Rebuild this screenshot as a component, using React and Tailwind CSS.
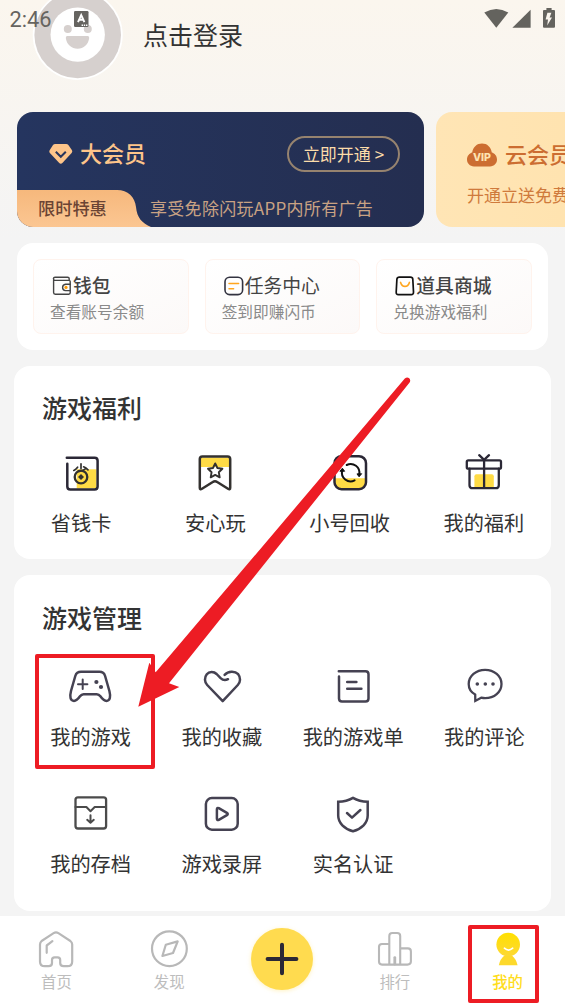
import { useId } from "react";

const dark = "#2b2836";
const slate = "#454252";
const yellow = "#ffdb45";

function Icon({ children, color = slate, width = 2.5 }) {
    return (
        <svg
            viewBox="0 0 48 48"
            className="h-12 w-12 shrink-0"
            fill="none"
            stroke={color}
            strokeWidth={width}
            strokeLinecap="round"
            strokeLinejoin="round"
        >
            {children}
        </svg>
    );
}

/* Juegos: beneficios */
const SaveCardIcon = () => (
    <Icon color={dark}>
        <path d="M19.7 20.3H39.5V39.5H19.7Z" fill={yellow} stroke="none" />
        <path d="M9.8 8.7H37.6Q40.6 8.7 40.6 11.7V37.5Q40.6 40.5 37.6 40.5H13.3Q10.3 40.5 10.3 37.5V14.8" />
        <circle cx="24" cy="28" r="6.3" stroke="#33312f" strokeWidth="2.3" />
        <path d="M24 25L27 28L24 31L21 28Z" fill="#33312f" stroke="none" />
        <path d="M24 14.8V19.4M20.6 18.2Q19 20.4 16.8 21.4M26.6 17.8Q29 18.8 31 20.8M28.8 19.6Q25.6 21.8 22 22.4" stroke="#33312f" strokeWidth="1.7" />
    </Icon>
);

const SafeIcon = () => (
    <Icon color="#33312f">
        <path d="M9.5 8.5H38.5V18H9.5Z" fill={yellow} stroke="none" />
        <path d="M8.8 38.7V10Q8.8 7.4 11.4 7.4H36.6Q39.2 7.4 39.2 10V38.7Q39.2 41.2 37 39.8L26.2 33Q24 31.4 21.8 33L11 39.8Q8.8 41.2 8.8 38.7Z" />
        <path d="M24.2 14.4L26.4 19L31.4 19.7L27.8 23.2L28.7 28.3L24.2 25.9L19.7 28.3L20.6 23.2L17 19.7L22 19Z" strokeWidth="1.9" />
    </Icon>
);

const RecycleIcon = () => (
    <Icon color={dark}>
        <path d="M9 29.3H39.5V33Q39.5 39.5 33 39.5H15.5Q9 39.5 9 33Z" fill={yellow} stroke="none" />
        <rect x="8.5" y="7.2" width="31.5" height="33" rx="7" />
        <g stroke="#111">
            <path d="M20.7 16A8.7 8.7 0 0 1 33.2 25.5M28.6 31.4A8.7 8.7 0 0 1 16.2 21.5" strokeWidth="2" />
            <path d="M31.2 25.2L33.1 27.8L35.4 25ZM14.2 22L16.4 19.2L18.4 22Z" fill="#111" strokeWidth="1" />
        </g>
    </Icon>
);

const GiftIcon = () => (
    <Icon color={dark} width={2.3}>
        <path d="M14.4 27.2Q14.4 25.2 16.4 25.2H31.8Q33.8 25.2 33.8 27.2V38.5H14.4Z" fill={yellow} stroke="none" />
        <rect x="6.8" y="11.3" width="34.2" height="8.4" rx="1.5" />
        <path d="M9.5 19.7V36.2Q9.5 39.2 12.5 39.2H35.8Q38.8 39.2 38.8 36.2V19.7M24.1 10.5V39M19.2 6.2L24.1 10.8L29 6.2" />
    </Icon>
);

/* Juegos: gestión */
const GamepadIcon = () => (
    <Icon>
        <path d="M14 9.8H32.4Q36.8 9.8 38.1 14L42.4 29C43.8 34.5 43.2 38.9 39.4 38.9C36.6 38.9 35 36.6 33.4 34.3Q31.9 32.2 29.8 32.2H16.6Q14.5 32.2 13 34.3C11.4 36.6 9.8 38.9 7 38.9C3.2 38.9 2.6 34.5 4 29L8.3 14Q9.6 9.8 14 9.8Z" />
        <path d="M11 22.2H20.4M15.7 17.4V27" strokeWidth="2" />
        <circle cx="29.4" cy="20" r="2.1" fill={slate} stroke="none" />
        <circle cx="34" cy="25" r="2.1" fill={slate} stroke="none" />
    </Icon>
);

const HeartIcon = () => (
    <Icon>
        <path d="M30 17.2Q26 19.4 22.6 16.2L18.6 12C15.8 9.2 11.2 9.2 8.8 12.2C6.2 15.4 6.4 20 9.2 23L24.7 39.2L39.8 23C42.6 20 42.8 15.4 40.2 12.2C36.8 8.6 30.4 8.8 26.6 12.8" />
    </Icon>
);

const ListIcon = () => (
    <Icon>
        <path d="M9.8 9.2H36.5Q39.5 9.2 39.5 12.2V36.6Q39.5 39.6 36.5 39.6H13Q10 39.6 10 36.6V14.6M18.2 20H27.4M18.2 26.8H32.4" />
    </Icon>
);

const CommentIcon = () => (
    <Icon width={2.3}>
        <path d="M15.2 32.6C10.6 30 8.7 26.4 8.7 22C8.7 14 16 7.8 25.1 7.8C34.2 7.8 41.5 14 41.5 22C41.5 30 34.2 36.2 25.1 36.2C23.8 36.2 22.4 36 21.2 35.7L15.3 38.9Z" strokeLinejoin="miter" />
        <g fill={slate} stroke="none">
            <circle cx="17.3" cy="22" r="1.8" />
            <circle cx="25.3" cy="22" r="1.8" />
            <circle cx="33" cy="22" r="1.8" />
        </g>
    </Icon>
);

const ArchiveIcon = () => (
    <Icon color="#4b4b4b" width={2.3}>
        <rect x="8.5" y="8.3" width="30.6" height="31.2" rx="2.5" />
        <path d="M8.5 18H19.4L23.5 22.2L27.7 18H39M23.5 26.2V33.6M20.2 30.8L23.5 33.8L26.8 30.8" strokeWidth="2" />
    </Icon>
);

const RecordIcon = () => (
    <Icon>
        <rect x="7.9" y="9.1" width="31.8" height="31.6" rx="6" />
        <path d="M18.9 20.4Q18.9 18.2 20.8 19.2L28.9 23.9Q30.6 25 28.9 26.1L20.8 30.8Q18.9 31.8 18.9 29.6Z" />
    </Icon>
);

const ShieldIcon = () => (
    <Icon>
        <path d="M24 8.9Q30.4 12.5 38.7 12.8V26.5C38.7 34 32.6 39.8 24 42.2C15.4 39.8 9.2 34 9.2 26.5V12.8Q17.6 12.5 24 8.9Z" strokeLinejoin="miter" />
        <path d="M18 24L23 28.7L31.4 21" />
    </Icon>
);

/* Barra inferior */
const HomeIcon = () => (
    <Icon color="#b8b8b8" width={2.2}>
        <path d="M8 19.6Q8 17.4 9.6 16L21.6 8.2Q24 6.6 26.4 8.2L38.4 16Q40.2 17.4 40.2 19.6V36.4Q40.2 41.2 35.4 41.2H31.6Q28.2 41.2 28.2 38V35Q28.2 32.4 25.6 32.4H22.6Q20 32.4 20 35V38Q20 41.2 16.6 41.2H12.8Q8 41.2 8 36.4Z" />
        <path d="M14.7 27.8V20.5L20.4 16.2" />
    </Icon>
);

const CompassIcon = () => (
    <Icon color="#b8b8b8" width={2.2}>
        <circle cx="24.4" cy="23.7" r="17.4" />
        <path d="M32.7 16.4L20.8 19.8L17.4 31L28 28Z" />
    </Icon>
);

const RankIcon = () => (
    <Icon color="#b8b8b8" width={2.1}>
        <path d="M18.3 39.6V11Q18.3 8 21.3 8H26.2Q29.2 8 29.2 11V39.6M18.3 19H11Q8 19 8 22V36.6Q8 39.6 11 39.6H36.4Q39.9 39.6 39.9 36.6V26.4Q39.9 23.4 36.9 23.4H29.2" />
        <path d="M23.8 32.6V39" strokeWidth="2.8" />
    </Icon>
);

function MeIcon() {
    const id = useId();
    return (
        <Icon>
            <defs>
                <linearGradient id={id} x1="0" y1="0" x2="0" y2="1">
                    <stop offset="0" stopColor="#ffe000" />
                    <stop offset="1" stopColor="#fdd835" />
                </linearGradient>
            </defs>
            <circle cx="24.2" cy="19.6" r="11.8" fill={`url(#${id})`} stroke="none" />
            <path d="M14.8 40.2Q16.4 33.6 20.2 30.8H28.2Q31.8 33.6 33.6 40.2Z" fill="#fdd92b" stroke="none" />
            <path d="M20.4 23.2Q24.5 27 28.7 23.2" stroke="#fff" strokeWidth="1.6" />
        </Icon>
    );
}

/* Accesos rápidos */
const quick = [
    {
        title: "钱包",
        text: "查看账号余额",
        weight: "font-medium",
        icon: (
            <>
                <path d="M1.6 4.2V16.6Q1.6 18.2 3.2 18.2H16.8Q18.2 18.2 18.2 16.8V5.6Q18.2 4.4 17 4.4H2.6Q1.4 4 1.4 2.6Q1.6 1.2 3 1.2H15.6Q17.2 1.2 17.2 2.8V4.4" stroke="#444" strokeWidth="1.4" />
                <path d="M18.2 8.2H13.6Q10.6 8.6 10.6 11.4Q10.6 14.2 13.6 14.6H18.2" stroke="#444" strokeWidth="1.4" />
                <circle cx="14" cy="11.4" r="1.6" fill="#ff9d0a" />
            </>
        ),
    },
    {
        title: "任务中心",
        text: "签到即赚闪币",
        weight: "font-normal",
        icon: (
            <>
                <rect x="1" y="1.2" width="17.6" height="17.4" rx="4.6" stroke="#333340" strokeWidth="1.6" />
                <path d="M5 7.6H14.6M5 12.8H9.6" stroke="#ffa51e" strokeWidth="1.5" />
            </>
        ),
    },
    {
        title: "道具商城",
        text: "兑换游戏福利",
        weight: "font-medium",
        icon: (
            <>
                <path d="M4.4 1.2H15.4Q17.6 1.2 17.8 3.2L18.5 16Q18.6 18.6 16.2 18.6H3.4Q1 18.6 1.2 16L1.9 3.2Q2.2 1.2 4.4 1.2Z" stroke="#111" strokeWidth="1.7" />
                <path d="M5.6 6.4Q6.8 10.4 10 10.4Q13.2 10.4 14.4 6.4" stroke="#ffa51e" strokeWidth="1.6" />
            </>
        ),
    },
];

const welfare = [
    { label: "省钱卡", icon: <SaveCardIcon /> },
    { label: "安心玩", icon: <SafeIcon /> },
    { label: "小号回收", icon: <RecycleIcon /> },
    { label: "我的福利", icon: <GiftIcon /> },
];

const manage = [
    { label: "我的游戏", icon: <GamepadIcon /> },
    { label: "我的收藏", icon: <HeartIcon /> },
    { label: "我的游戏单", icon: <ListIcon /> },
    { label: "我的评论", icon: <CommentIcon /> },
    { label: "我的存档", icon: <ArchiveIcon /> },
    { label: "游戏录屏", icon: <RecordIcon /> },
    { label: "实名认证", icon: <ShieldIcon /> },
];

function Cell({ icon, label, gap = "mt-3" }) {
    return (
        <div className="flex flex-col items-center">
            {icon}
            <span className={`${gap} h-7 text-[20.2px] leading-7 whitespace-nowrap text-[#333]`}>{label}</span>
        </div>
    );
}

function Header() {
    return (
        <header className="relative flex h-[112px] items-start">
            {/* Avatar */}
            <svg viewBox="0 0 92 81" className="ml-8 h-[81px] w-[92px]">
                <circle cx="45.7" cy="35" r="45" fill="#fff" />
                <circle cx="45.7" cy="35" r="43.3" fill="#d6d0ce" />
                <circle cx="45.7" cy="34.6" r="27.2" fill="#fff" />
                <circle cx="35.8" cy="29" r="4" fill="#d6d0ce" />
                <circle cx="55.8" cy="29" r="4" fill="#d6d0ce" />
                <path d="M35.4 36H55.6Q57.4 36 57.2 38C56.4 44.6 51.6 48.8 45.6 48.8C39.6 48.8 34.6 44.6 33.8 38Q33.6 36 35.4 36Z" fill="#d6d0ce" />
            </svg>
            <h1 className="ml-[19px] h-10 pt-3.5 text-[25px] leading-10 text-[#333]">点击登录</h1>

            {/* Barra de estado */}
            <div className="absolute inset-x-0 top-0 flex h-10 items-center text-[#666460]">
                <span className="w-[64px] pl-[9.5px] font-[Roboto] text-[21.8px]">2:46</span>
                <svg viewBox="0 0 15 16" className="mb-0.5 ml-[10px] h-4 w-[15px]">
                    <rect width="14.5" height="16" rx="1.2" fill="#666460" />
                    <path d="M4 11.2L7.2 4L10.4 11.2M5.4 8.8H9" stroke="#fff" strokeWidth="1.9" fill="none" />
                    <path d="M7.6 14.2H13.4" stroke="#fff" strokeWidth="1.5" strokeDasharray="1.4 .8" />
                </svg>
                <svg viewBox="0 0 72 21" className="mr-[9px] mb-[3px] ml-auto h-[21px] w-[72px]" fill="#64635e">
                    <path d="M0.3 4.6Q12.3-2.4 24.3 4.6L12.3 19.8Z" />
                    <path d="M28.4 19.8L46.6 1.8V19.8Z" />
                    <path fillRule="evenodd" d="M62.4 0H67.6V2H70Q71 2 71 3V18.8Q71 19.8 70 19.8H60Q59 19.8 59 18.8V3Q59 2 60 2H62.4ZM63.4 4.8L61.6 11.6H64L63.2 17.4L68 9.6H65.6L67.4 4.8Z" />
                </svg>
            </div>
        </header>
    );
}

function Banners() {
    return (
        <div className="ml-[17px] flex h-[115px] gap-3 overflow-hidden">
            {/* Tarjeta principal */}
            <div className="flex w-[407px] shrink-0 flex-col overflow-hidden rounded-2xl bg-gradient-to-r from-[#25355f] to-[#242e50]">
                <div className="flex h-[78px] items-center pt-1.5 pr-6 pl-8">
                    <svg viewBox="0 0 24 22" className="h-[22px] w-6">
                        <path d="M6.2 1H17.2Q18.6 1 19.4 2L22.8 7Q23.8 8.6 22.6 10L13.6 19.8Q11.8 21.6 10 19.8L.9 10Q-.2 8.6 .8 7L4 2Q4.8 1 6.2 1Z" fill="#fec58a" />
                        <path d="M6.8 8.8L11.8 13.8L16.8 8.8" fill="none" stroke="#29365d" strokeWidth="2" />
                    </svg>
                    <span className="mb-[3px] ml-[7px] text-[22px] font-medium text-[#fec58a]">大会员</span>
                    <span className="ml-auto flex h-9 w-[113px] items-center justify-center rounded-full border-2 border-[#96836f] text-[17px] whitespace-pre text-[#fbdcaa]">立即开通 &gt;</span>
                </div>
                <div className="relative flex h-[37px] items-center pb-0.5">
                    <svg viewBox="0 0 134 37" className="absolute top-0 left-0 h-[37px] w-[134px]">
                        <defs>
                            <linearGradient id="tab" x1="0" y1="0" x2="0" y2="1">
                                <stop offset="0" stopColor="#f6b87c" />
                                <stop offset="1" stopColor="#fbc692" />
                            </linearGradient>
                        </defs>
                        <path d="M0 0H100C111 0 118 7 119 17C120 28 125 33 134 37H0Z" fill="url(#tab)" />
                    </svg>
                    <span className="relative ml-[21px] w-[112px] text-[17.2px] font-medium text-[#6b4434]">限时特惠</span>
                    <span className="text-[17px] tracking-[0.3px] whitespace-nowrap text-[#c9a283]">享受免除闪玩APP内所有广告</span>
                </div>
            </div>

            {/* Tarjeta nube */}
            <div className="w-[407px] shrink-0 rounded-2xl bg-gradient-to-r from-[#ffe5b5] to-[#ffdfa4] pl-[31px]">
                <div className="flex h-[60px] items-center pt-[26px]">
                    <svg viewBox="0 0 30 24" className="h-6 w-[30px]">
                        <path d="M7 23.4C2.8 23.4 0 20.4 0 16.6C0 12.8 2.6 10.4 5.2 9.6C6 4 10 .6 15 .6C20 .6 24 4 24.8 9.6C27.6 10.4 30 12.8 30 16.6C30 20.4 27.2 23.4 23 23.4Z" fill="#cc6d31" />
                        <text x="15" y="18.4" textAnchor="middle" textLength="18" lengthAdjust="spacingAndGlyphs" fill="#ffe3b0" fontFamily="Inter, sans-serif" fontWeight="800" fontSize="10">VIP</text>
                    </svg>
                    <span className="mb-[3px] ml-2 text-[22px] font-medium whitespace-nowrap text-[#cc6d31]">云会员</span>
                </div>
                <p className="mt-[9px] text-[17px] leading-7 whitespace-nowrap text-[#cf7a3c]">开通立送免费</p>
            </div>
        </div>
    );
}

function QuickCards() {
    return (
        <section className="mx-[17px] mt-4 grid h-[107px] grid-cols-3 gap-4 rounded-2xl bg-white p-4">
            {quick.map((item) => (
                <div key={item.title} className="rounded-lg border border-[#fff3ed] bg-gradient-to-br from-white to-[#fcf9f8] pt-[15px] pl-4">
                    <div className="flex h-[22px] items-center gap-px pl-0.5">
                        <svg viewBox="0 0 20 20" className="h-5 w-5" fill="none" strokeLinecap="round">
                            {item.icon}
                        </svg>
                        <span className={`${item.weight} mb-0.5 text-[18.8px] leading-[22px] text-[#444]`}>{item.title}</span>
                    </div>
                    <p className="mt-[3px] text-[15.7px] leading-6 text-[#8a8a8a]">{item.text}</p>
                </div>
            ))}
        </section>
    );
}

function NavItem({ icon, label, active }) {
    return (
        <div className="flex flex-col items-center pt-[9px]">
            {icon}
            <span className={`-mt-px text-[15.4px] leading-[18px] ${active ? "font-medium text-[#ffdd1c]" : "text-[#bdbdbd]"}`}>{label}</span>
        </div>
    );
}

function BottomNav() {
    return (
        <nav className="mt-[5px] grid h-[88px] grid-cols-5 bg-white pr-px">
            <NavItem icon={<HomeIcon />} label="首页" />
            <NavItem icon={<CompassIcon />} label="发现" />
            <div className="flex justify-center pt-3">
                <div className="flex h-[62px] w-[62px] items-center justify-center rounded-full bg-[#ffdb4f] shadow-[0_1px_4px_rgba(255,219,79,0.35)]">
                    <svg viewBox="0 0 34 34" className="h-[34px] w-[34px]" stroke="#2b2836" strokeWidth="4" strokeLinecap="round">
                        <path d="M17 2.8V31.2M2.6 17H31.4" />
                    </svg>
                </div>
            </div>
            <NavItem icon={<RankIcon />} label="排行" />
            <NavItem icon={<MeIcon />} label="我的" active />
        </nav>
    );
}

export default function App() {
    return (
        <main className="relative h-[1004px] w-[565px] overflow-hidden bg-[#f4f4f4] bg-[linear-gradient(#fbf6ee_0,#f4f4f4_240px)] font-['Noto_Sans_CJK_SC','Noto_Sans',sans-serif]">
            <Header />
            <Banners />
            <QuickCards />

            <section className="mx-[14px] mt-4 h-[193px] rounded-2xl bg-white pt-[23px]">
                <h2 className="ml-7 h-9 text-[25px] leading-9 font-medium text-[#333]">游戏福利</h2>
                <div className="mt-6 grid grid-cols-4">
                    {welfare.map((item) => <Cell key={item.label} {...item} />)}
                </div>
            </section>

            <section className="mx-[14px] mt-4 h-[336px] rounded-2xl bg-white pt-6">
                <h2 className="ml-7 h-9 text-[25px] leading-9 font-medium text-[#333]">游戏管理</h2>
                <div className="mt-[27px] mr-px ml-[11px] grid grid-cols-4 gap-y-[38px]">
                    {manage.map((item) => <Cell key={item.label} {...item} gap="mt-[13px]" />)}
                </div>
            </section>

            <BottomNav />

            {/* Marcas rojas sobre la pantalla */}
            <div className="absolute top-[654px] left-[35px] h-[115px] w-[120px] rounded-[2px] border-4 border-[#ed1c24]" />
            <div className="absolute top-[925px] left-[468px] h-[78px] w-[71px] rounded-[2px] border-4 border-[#ed1c24]" />
            <svg viewBox="0 0 276 334" className="absolute top-[375px] left-[136px] h-[334px] w-[276px]">
                <path d="M2.3 331.7L13.3 287.7L19.7 297.3L268.8 3.6Q271 1.6 273.2 3.2Q275 5 273.6 7.4L33 308.3L43.3 312Z" fill="#ed1c24" />
            </svg>
        </main>
    );
}
